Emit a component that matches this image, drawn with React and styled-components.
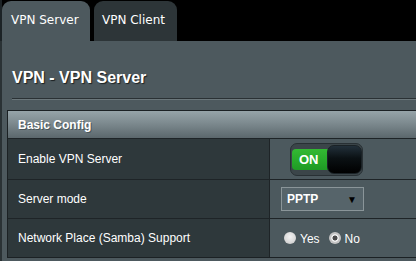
import React from 'react';
import styled, { createGlobalStyle } from 'styled-components';

const GlobalStyle = createGlobalStyle`
    html, body {
        margin: 0;
        padding: 0;
        background: #000;
        overflow: hidden;
    }
    body {
        font-family: "Liberation Sans", Arial, sans-serif;
        color: #fff;
    }
`;

const Page = styled.div`
    width: 416px;
    height: 261px;
    overflow: hidden;
    background: #000;
`;

const TabBar = styled.div`
    display: flex;
    align-items: flex-end;
    gap: 4px;
    height: 41px;
    padding-left: 2px;
    background: linear-gradient(to right, #1c2326 0, #1c2326 2px, #000 2px);
`;

const Tab = styled.div`
    width: ${p => p.$width}px;
    height: 40px;
    box-sizing: border-box;
    padding: 0 0 2px ${p => p.$pad}px;
    display: flex;
    align-items: center;
    border-radius: 9px 9px 0 0;
    background: ${p => (p.$active ? '#4d595e' : '#2d3538')};
    font-family: "DejaVu Sans", Verdana, sans-serif;
    font-size: 12px;
    color: #fff;
`;

const Panel = styled.div`
    height: 220px;
    background: #4d595e;
    border-left: 2px solid #2a3235;
    padding-left: 5px;
`;

const Title = styled.h1`
    margin: 0 0 0 5px;
    padding-top: 27px;
    font-size: 16px;
    line-height: 19px;
    font-weight: bold;
    color: #fff;
    text-shadow: 1px 1px 1px #1b2022;
`;

const Rule = styled.div`
    margin: 11px 0 0 5px;
    height: 1px;
    background: #2a3134;
    border-bottom: 1px solid #6b777b;
`;

const Table = styled.div`
    margin-top: 10px;
    width: 420px;
    border: 1px solid #1b2124;
    border-right: none;
`;

const HeaderRow = styled.div`
    height: 27px;
    display: flex;
    align-items: center;
    padding-left: 10px;
    background: linear-gradient(to bottom, #96a4a9 0%, #7d8a8f 45%, #5b676c 100%);
    font-size: 12px;
    font-weight: bold;
    text-shadow: 1px 1px 0 #4a5559;
`;

const Row = styled.div`
    display: grid;
    grid-template-columns: 262px 1fr;
    height: ${p => p.$height}px;
    border-top: 1px solid #1e2427;
`;

const LabelCell = styled.div`
    display: flex;
    align-items: center;
    padding-left: 10px;
    background: #2e383b;
    border-right: 1px solid #1e2427;
    font-size: 12px;
    color: #fff;
`;

const ValueCell = styled.div`
    display: flex;
    align-items: center;
    padding-left: ${p => p.$pad}px;
    background: #4c595e;
`;

const Switch = styled.div`
    display: flex;
    align-items: center;
    width: 73px;
    height: 33px;
    box-sizing: border-box;
    padding-left: 1px;
    border: 1px solid #283034;
    border-radius: 7px;
    background: #3b4549;
`;

const SwitchOn = styled.div`
    width: 37px;
    height: 21px;
    display: flex;
    align-items: center;
    padding-left: 7px;
    box-sizing: border-box;
    border-radius: 4px 0 0 4px;
    background: linear-gradient(to bottom, #33b933 0%, #26a82a 60%, #1f9a25 100%);
    font-size: 13px;
    font-weight: bold;
    color: #fff;
`;

const Knob = styled.div`
    width: 35px;
    height: 29px;
    box-sizing: border-box;
    margin-left: -2px;
    border: 1px solid #1a2226;
    border-radius: 7px;
    background: linear-gradient(to bottom, #22303a 0%, #0b1114 45%, #000 100%);
`;

const Select = styled.div`
    width: 83px;
    height: 24px;
    box-sizing: border-box;
    display: flex;
    align-items: center;
    justify-content: space-between;
    padding: 0 6px 0 5px;
    border: 1px solid #8a9599;
    background: #56646a;
    font-size: 12px;
    font-weight: bold;
    color: #fff;
`;

const Arrow = styled.span`
    font-size: 10px;
    color: #000;
`;

const RadioGroup = styled.div`
    display: flex;
    align-items: center;
    padding-top: 2px;
    font-size: 12px;
    color: #fff;
`;

const Radio = styled.span`
    width: 12px;
    height: 12px;
    box-sizing: border-box;
    border-radius: 50%;
    margin: 0 4px 3px ${p => p.$gap}px;
    background: ${p =>
        p.$checked
            ? 'radial-gradient(circle, #4a4a4a 0 2.2px, #f2f2f2 2.8px 3.4px, #c4c4c4 4.2px)'
            : 'radial-gradient(circle at 50% 40%, #f2f2f2 0, #d9d9d9 60%, #bdbdbd 100%)'};
`;

const App = () => {
    return (
        <Page>
            <GlobalStyle />
            <TabBar>
                <Tab $active $width={88} $pad={9}>VPN Server</Tab>
                <Tab $width={83} $pad={8}>VPN Client</Tab>
            </TabBar>
            <Panel>
                <Title>VPN - VPN Server</Title>
                <Rule />
                <Table>
                    <HeaderRow>Basic Config</HeaderRow>
                    <Row $height={40}>
                        <LabelCell>Enable VPN Server</LabelCell>
                        <ValueCell $pad={20}>
                            <Switch>
                                <SwitchOn>ON</SwitchOn>
                                <Knob />
                            </Switch>
                        </ValueCell>
                    </Row>
                    <Row $height={38}>
                        <LabelCell>Server mode</LabelCell>
                        <ValueCell $pad={11}>
                            <Select>
                                PPTP
                                <Arrow>▼</Arrow>
                            </Select>
                        </ValueCell>
                    </Row>
                    <Row $height={38}>
                        <LabelCell>Network Place (Samba) Support</LabelCell>
                        <ValueCell $pad={0}>
                            <RadioGroup>
                                <Radio $gap={14} />
                                Yes
                                <Radio $checked $gap={9} />
                                No
                            </RadioGroup>
                        </ValueCell>
                    </Row>
                </Table>
            </Panel>
        </Page>
    );
};

export default App;
